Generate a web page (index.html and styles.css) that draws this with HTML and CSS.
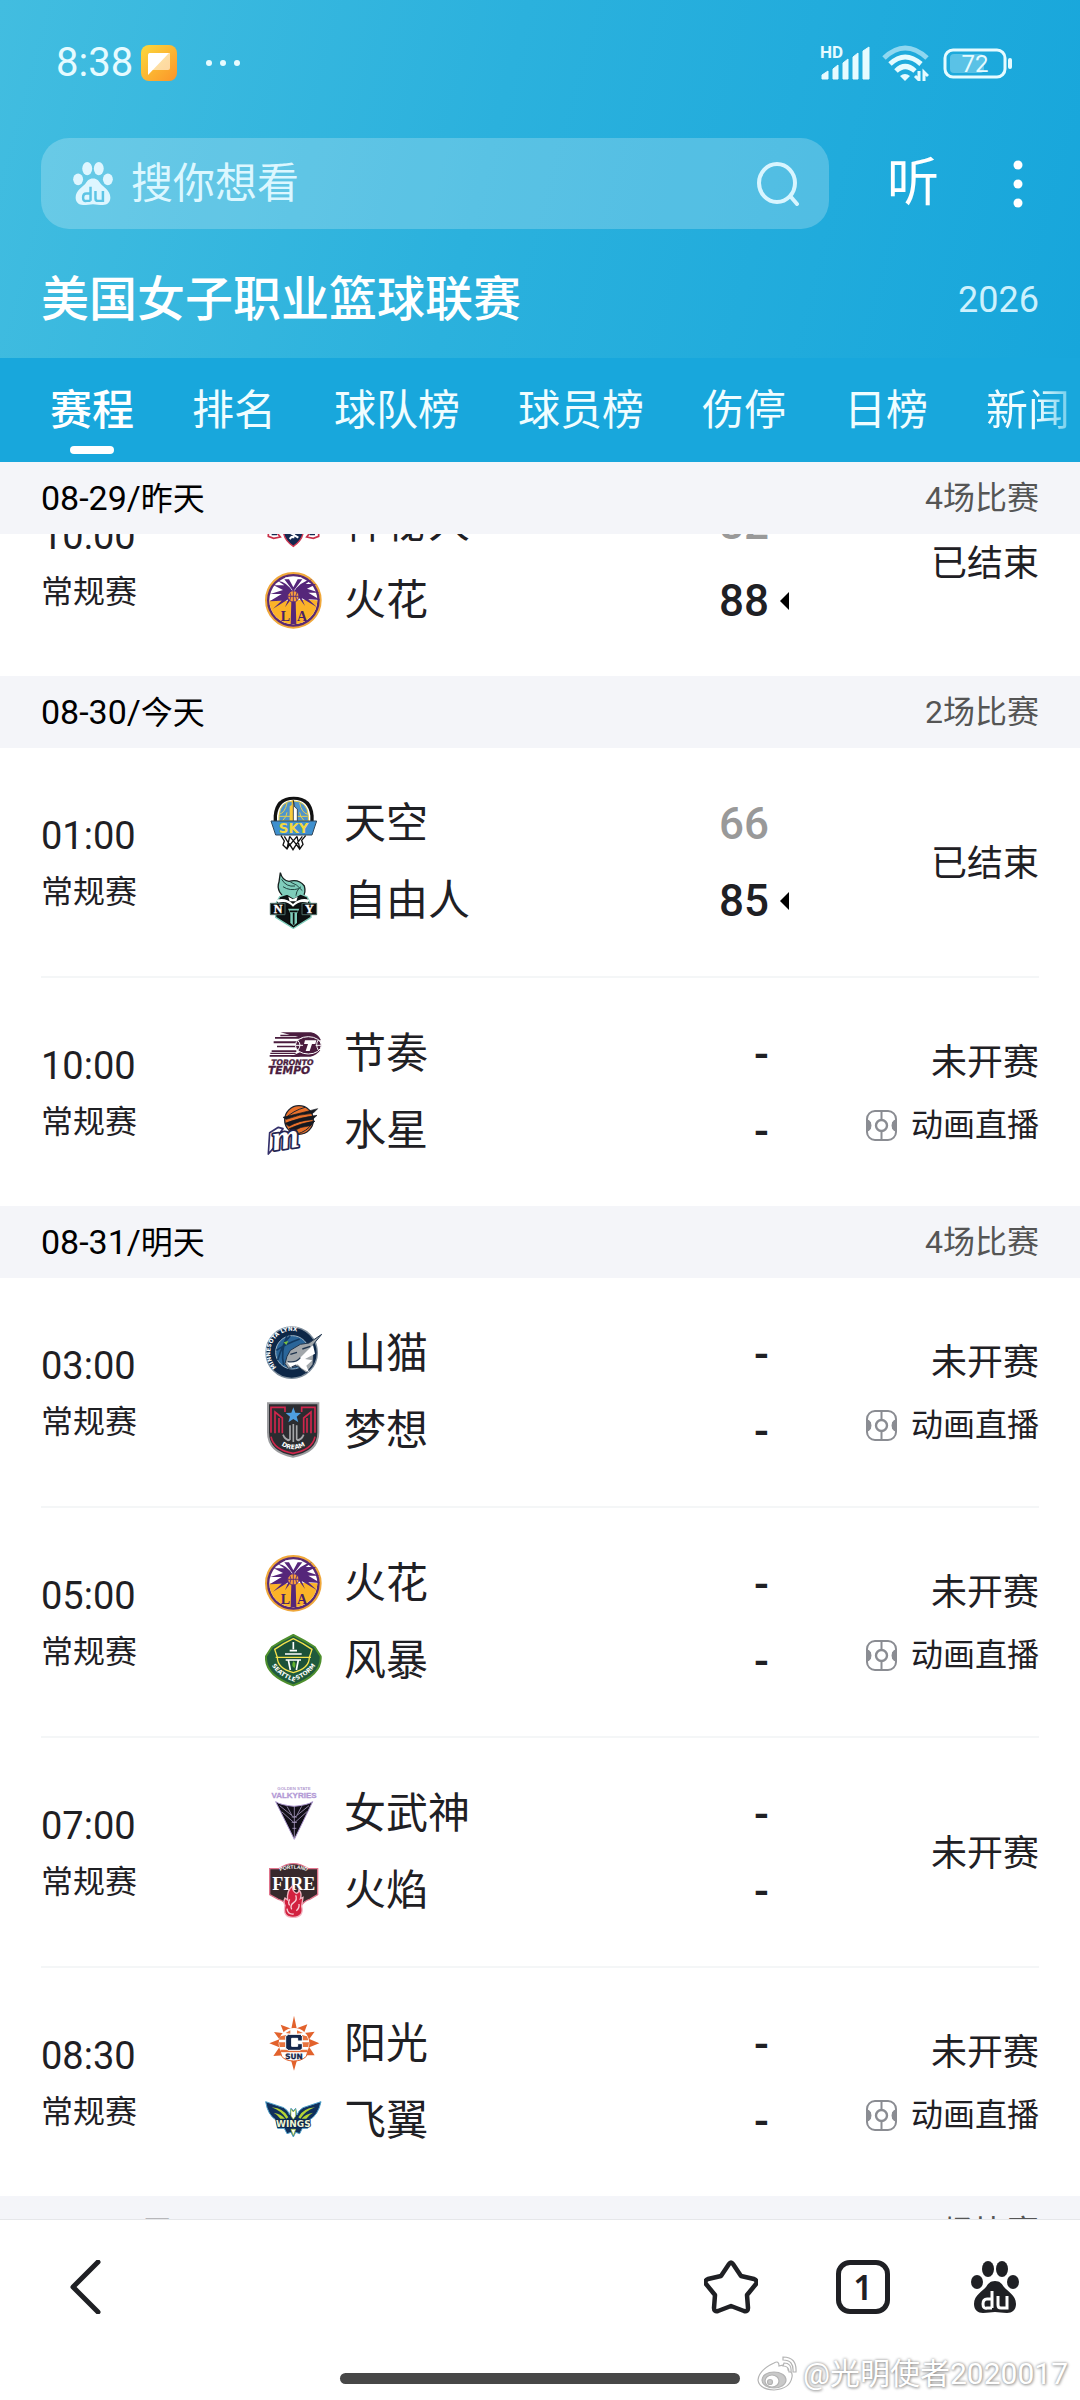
FILE: index.html
```html
<!DOCTYPE html>
<html lang="zh-CN">
<head>
<meta charset="utf-8">
<meta name="viewport" content="width=device-width">
<title>美国女子职业篮球联赛</title>
<link rel="stylesheet" href="styles.css">
</head>
<body>

<svg class="sprite" aria-hidden="true">
  <symbol id="paw" viewBox="0 0 48 52">
    <ellipse cx="17" cy="8" rx="6" ry="8"/>
    <ellipse cx="31" cy="8" rx="6" ry="8"/>
    <ellipse cx="6" cy="21" rx="6" ry="7"/>
    <ellipse cx="42" cy="21" rx="6" ry="7"/>
    <path d="M24 20c5 0 7 3 9 6 3 4 12 8 12 17 0 6-4 9-9 9-5 0-8-1-12-1s-7 1-12 1c-5 0-9-3-9-9 0-9 9-13 12-17 2-3 4-6 9-6z"/>
    <path class="paw-du" d="M21 30v17M21 38h-5q-4 0-4 5t4 4h5M27 35v9q0 3 3 3h6v-12"/>
  </symbol>

  <symbol id="live" viewBox="0 0 31 31">
    <rect x="1" y="1" width="29" height="29" rx="8" fill="none" stroke="#8a8c92" stroke-width="2"/>
    <path d="M2 10q3 1 3 5.500t-3 5.500zM29 10q-3 1-3 5.500t3 5.500z" fill="#8a8c92" stroke="#8a8c92"/>
    <path d="M15.500 1v9M15.500 21v9" stroke="#8a8c92" stroke-width="2"/>
    <circle cx="15.500" cy="15.500" r="5.500" fill="none" stroke="#8a8c92" stroke-width="2.400"/>
  </symbol>

  <symbol id="sparks" viewBox="0 0 171 171">
    <circle cx="85" cy="85" r="82" fill="#5a2a73" stroke="#f0a83a" stroke-width="6"/>
    <circle cx="85" cy="85" r="72" fill="#fff"/>
    <path d="M13 85a72 72 0 0 0 144 0q-30-4-72 0t-72 0z" fill="#fbb328"/>
    <path d="M79 90h13l2 66H77z" fill="#55267a"/>
    <path d="M85 62Q68 30 38 26l20 14-32 0 28 14-38 12 34 0-36 22 36-2-26 24 46-28-10 24 24-32 12-4 24 32-10-24 46 28-26-24 36 2-36-22 34 0-38-12 28-14-32 0 20-14Q102 30 85 62z" fill="#55267a"/>
    <path d="M85 54L60 16h50z" fill="#fff"/>
    <path d="M85 58L58 22l14 0 13 24 13-24h14z" fill="#55267a"/>
    <circle cx="85" cy="73" r="17" fill="#f79d3c" stroke="#55267a" stroke-width="3"/>
    <path d="M85 56v34M68 73h34M74 60q8 13 0 26M96 60q-8 13 0 26" fill="none" stroke="#55267a" stroke-width="2.500"/>
  </symbol>
</svg>

<header class="top">
  <div class="status-bar">
    <span class="clock">8:38</span>
    <svg class="app-icon" viewBox="0 0 36 36" aria-hidden="true">
      <defs><linearGradient id="amber" x1="0" y1="0" x2="1" y2="1"><stop offset="0" stop-color="#fbd93c"/><stop offset="1" stop-color="#fc9429"/></linearGradient></defs>
      <rect width="36" height="36" rx="8" fill="url(#amber)"/>
      <path d="M8 8h21v15q0 2-2 2H8z" fill="#fff" opacity=".55"/>
      <path d="M7 10q0-2 2-2h19L7 30z" fill="#fff"/>
    </svg>
    <svg class="more-dots" viewBox="0 0 36 8" aria-hidden="true"><g fill="#e6fbff"><circle cx="4" cy="4" r="3"/><circle cx="18" cy="4" r="3"/><circle cx="32" cy="4" r="3"/></g></svg>
    <svg class="signal" viewBox="0 0 50 36" aria-hidden="true">
      <text x="0" y="13" font-size="17" font-weight="700" fill="#e6fbff">HD</text>
      <path d="M2 34v-4l6-4v8zM13 34V24l5-4v14zM23 34V18l5-4v20zM33 34V12l5-4v26zM43 34V6l6-4v32z" fill="#e6fbff" stroke="#e6fbff" stroke-linejoin="round"/>
    </svg>
    <svg class="wifi" viewBox="0 0 47 36" fill="none" aria-hidden="true">
      <path d="M2 13q21-20 43 0" stroke="#8fd7f0" stroke-width="5"/>
      <path d="M8 19q15-14 31 0" stroke="#e6fbff" stroke-width="5"/>
      <path d="M14 26q9-9 19 0" stroke="#e6fbff" stroke-width="5"/>
      <path d="M18 31q5-4 10 0l-5 5z" fill="#e6fbff"/>
      <path d="M37 26v9l-4-4M42 36v-9l4 4" stroke="#e6fbff" stroke-width="3"/>
    </svg>
    <svg class="battery" viewBox="0 0 70 31" aria-hidden="true">
      <rect x="2" y="2" width="60" height="27" rx="8" fill="none" stroke="#e6fbff" stroke-width="3"/>
      <rect x="7" y="6" width="34" height="19" rx="4" fill="#5ac2e6"/>
      <rect x="65" y="10" width="4" height="11" rx="2" fill="#e6fbff"/>
      <text x="32" y="24" font-size="24" fill="#e6fbff" text-anchor="middle">72</text>
    </svg>
  </div>

  <div class="search-row">
    <form class="search" role="search">
      <svg class="search-paw" aria-hidden="true"><use href="#paw"/></svg>
      <input class="search-input" type="text" placeholder="搜你想看" aria-label="搜索">
      <button class="search-go" type="button" aria-label="搜索">
        <svg viewBox="0 0 44 44" fill="none" stroke="#d8f5ff" stroke-width="4" stroke-linecap="round"><ellipse cx="20" cy="21" rx="18" ry="19"/><path d="M34 35l6 7"/></svg>
      </button>
    </form>
    <button class="listen" type="button">听</button>
    <button class="kebab" type="button" aria-label="更多">
      <svg viewBox="0 0 42 52" fill="#fff"><circle cx="21" cy="7" r="4.500"/><circle cx="21" cy="26" r="4.500"/><circle cx="21" cy="45" r="4.500"/></svg>
    </button>
  </div>

  <div class="title-row">
    <h1 class="title">美国女子职业篮球联赛</h1>
    <span class="season">2026</span>
  </div>
</header>

<nav class="tabs">
  <a class="tab tab-active" href="#schedule">赛程</a>
  <a class="tab" href="#rank">排名</a>
  <a class="tab" href="#teams">球队榜</a>
  <a class="tab" href="#players">球员榜</a>
  <a class="tab" href="#injury">伤停</a>
  <a class="tab" href="#daily">日榜</a>
  <a class="tab" href="#news">新闻</a>
</nav>

<main class="schedule" id="schedule">
  <section>
    <h2 class="day"><span><span class="date">08-29/</span>昨天</span><span class="count">4场比赛</span></h2>
    <div class="scrolled">
      <article class="match">
        <div class="when"><time class="time">10:00</time><span class="stage">常规赛</span></div>
        <div class="teams">
          <div class="team">
            <svg class="logo" viewBox="0 0 171 171" aria-hidden="true">
              <path d="M55 18h60v88q0 28-30 48-30-20-30-48z" fill="#14284f" stroke="#d23a54" stroke-width="4"/>
              <path d="M85 40v90M65 60h40M70 110l30 18M98 106l-24 26" stroke="#fff" stroke-width="6"/>
              <path d="M10 110l8-16 10 10 14-6-4 18 8 10-20 4-16-6z" fill="#fff" stroke="#c9304a" stroke-width="5"/>
              <path d="M161 110l-8-16-10 10-14-6 4 18-8 10 20 4 16-6z" fill="#fff" stroke="#c9304a" stroke-width="5"/>
              <path d="M20 118h16M134 118h16" stroke="#14284f" stroke-width="5"/>
            </svg>
            <span class="name">神秘人</span><span class="score lost">82</span>
          </div>
          <div class="team won">
            <svg class="logo" viewBox="0 0 171 171" aria-hidden="true">
              <use href="#sparks"/>
              <text x="47" y="148" class="serif" font-size="42" fill="#4a2166">L</text>
              <text x="96" y="148" class="serif" font-size="42" fill="#4a2166">A</text>
            </svg>
            <span class="name">火花</span><span class="score">88</span>
          </div>
        </div>
        <div class="state"><span class="state-text">已结束</span></div>
      </article>
    </div>
  </section>

  <section>
    <h2 class="day"><span><span class="date">08-30/</span>今天</span><span class="count">2场比赛</span></h2>
    <article class="match">
      <div class="when"><time class="time">01:00</time><span class="stage">常规赛</span></div>
      <div class="teams">
        <div class="team">
          <svg class="logo" viewBox="0 0 171 171" aria-hidden="true">
            <path d="M26 78V62Q30 5 86 5t60 57v16z" fill="#111"/>
            <path d="M36 78V62Q42 14 86 14t50 48v16z" fill="#fff"/>
            <path d="M42 78V62Q46 18 86 18t44 44v16z" fill="#4e94cc" stroke="#e8cf4a" stroke-width="3"/>
            <path d="M42 58q18-4 24-34M128 58q-18-4-24-34M42 64h86M52 78q14-14 14-26M118 78q-14-14-14-26" fill="none" stroke="#e8cf4a" stroke-width="3"/>
            <path d="M74 80V34l6-4V16h5v64z" fill="#f8cb3c"/>
            <path d="M85 80V16l4 20 8 6v38z" fill="#fff" stroke="#111" stroke-width="2"/>
            <path d="M18 78h137l-14 42H32z" fill="#3f90cf" stroke="#31475a" stroke-width="3"/>
            <text x="86" y="113" class="wide" font-size="40" fill="#f3d840" text-anchor="middle">SKY</text>
            <path d="M48 122l10 16-4 12 12 12 8-14 10 16 10-16 10 14 10-14-4-12 12-14M58 124l16 26M74 124l-8 38M74 124l20 24M96 124l-20 24M96 124l8 36M112 124l-18 24" fill="none" stroke="#111" stroke-width="4"/>
          </svg>
          <span class="name">天空</span><span class="score lost">66</span>
        </div>
        <div class="team won">
          <svg class="logo" viewBox="0 0 171 171" aria-hidden="true">
            <path d="M46 2q6 24 26 26 30-8 46 14 6 20-6 36l-24 2q-34 0-44-20-8-16-2-30z" fill="#7fcdbb" stroke="#16201f" stroke-width="4"/>
            <path d="M50 22q14 24 40 20M54 44q20 14 48 6M76 30q20 6 36 26M94 78q-4-20 14-34" fill="none" stroke="#214641" stroke-width="3"/>
            <path d="M44 74l22-8 20 12 20-12 20 8 12 22v40l-53 33-53-33V96z" fill="#0d1112" stroke="#7fcdbb" stroke-width="4"/>
            <path d="M34 84q26-10 50 12 24-22 50-12l-6 8q-26-8-44 12-18-20-44-12zM70 74l14 8 14-8-4 14H74z" fill="#fff"/>
            <path d="M16 94h44v34H16zM111 94h44v34h-44z" fill="#0a0a0a" stroke="#4b6b66" stroke-width="3"/>
            <path d="M66 108h40l-8 18v28l-12 10-12-10v-28z" fill="#7fcdbb" stroke="#0a0a0a" stroke-width="4"/>
            <path d="M74 118h24M86 122v36" stroke="#0a0a0a" stroke-width="5"/>
            <text x="39" y="123" class="serif" font-size="36" fill="#fff" stroke="#fff" text-anchor="middle">N</text>
            <text x="133" y="123" class="serif" font-size="36" fill="#fff" stroke="#fff" text-anchor="middle">Y</text>
          </svg>
          <span class="name">自由人</span><span class="score">85</span>
        </div>
      </div>
      <div class="state"><span class="state-text">已结束</span></div>
    </article>
    <article class="match">
      <div class="when"><time class="time">10:00</time><span class="stage">常规赛</span></div>
      <div class="teams">
        <div class="team">
          <svg class="logo" viewBox="0 0 171 171" aria-hidden="true">
            <path d="M46 22h92q22 4 30 24l-60-8zM30 36h78v5H30zM46 29h70v5H46zM26 49h72v6H26zM36 62h56v5H36zM20 76h74v5H20zM14 90h90v5H14zM16 83h76v4H16z" fill="#4a1c3e"/>
            <path d="M76 95h60q20-4 30-20l-60 6z" fill="#4a1c3e"/>
            <ellipse cx="130" cy="61" rx="39" ry="26" fill="#4a1c3e" stroke="#fff" stroke-width="3"/>
            <path d="M92 61h22M152 61h17M98 46q14 14 0 30M160 44q-10 14 0 32" fill="none" stroke="#fff" stroke-width="3"/>
            <path d="M120 46h34l-3 11h-10l-7 21h-12l7-21h-12z" fill="#fff"/>
            <text x="82" y="121" class="wide slant" font-size="23" fill="#4a1c3e" stroke="#4a1c3e" text-anchor="middle">TORONTO</text>
            <text x="72" y="147" class="wide slant" font-size="32" fill="#4a1c3e" stroke="#4a1c3e" text-anchor="middle">TEMPO</text>
          </svg>
          <span class="name">节奏</span><span class="score">-</span>
        </div>
        <div class="team">
          <svg class="logo" viewBox="0 0 171 171" aria-hidden="true">
            <circle cx="102" cy="54" r="43" fill="#e9702a" stroke="#20242e" stroke-width="4"/>
            <path d="M60 50q24-24 60-34M96 96q30-8 44-30" fill="none" stroke="#20242e" stroke-width="3"/>
            <path d="M54 46q50-12 104-26l-14 14q-40 2-80 18zM60 64q44-18 96-24l-14 13q-40 2-70 20zM72 80q40-18 78-23l-14 14q-30 2-54 18z" fill="#15181f" stroke="#15181f" stroke-width="2"/>
            <path d="M14 92l26-16 14 4-10 14-8 34-12 12-14 16z" fill="#fff" stroke="#34306b" stroke-width="5" stroke-linejoin="round"/>
            <text x="22" y="140" class="serif slant" font-size="104" fill="#fff" stroke="#232350" stroke-width="11" stroke-linejoin="round" paint-order="stroke" transform="rotate(-8 60 120)">m</text>
          </svg>
          <span class="name">水星</span><span class="score">-</span>
        </div>
      </div>
      <div class="state"><span class="state-text">未开赛</span><a class="live" href="#live"><svg class="live-icon"><use href="#live"/></svg>动画直播</a></div>
    </article>
  </section>

  <section>
    <h2 class="day"><span><span class="date">08-31/</span>明天</span><span class="count">4场比赛</span></h2>
    <article class="match">
      <div class="when"><time class="time">03:00</time><span class="stage">常规赛</span></div>
      <div class="teams">
        <div class="team">
          <svg class="logo" viewBox="0 0 171 171" aria-hidden="true">
            <circle cx="80" cy="83" r="77" fill="#0d2747" stroke="#7f8e9c" stroke-width="4"/>
            <circle cx="82" cy="82" r="50" fill="#2a6599" stroke="#9db4c6" stroke-width="3"/>
            <path d="M34 76q30-20 70-34M38 106q14-50 38-74M56 120q-10-40 10-88" fill="none" stroke="#123a63" stroke-width="5"/>
            <path id="lynx-arc" d="M35 127A62 62 0 1 1 124 36" fill="none"/>
            <text class="wide" font-size="17" fill="#fff"><textPath href="#lynx-arc">MINNESOTA LYNX</textPath></text>
            <path d="M170 28l-28 34 4 22-2 34-20 26-26-20-28 6-10-14 6-22 10-18 30-18 26-4z" fill="#a2a7ab" stroke="#20354e" stroke-width="3"/>
            <path d="M144 60l6 26-30 16 22 4-18 16 8 20-22-12-12-12-20 10-12-16 32-6z" fill="#fff"/>
            <path d="M76 88l20-6M68 110q26 4 38-12M80 126l14-6M112 72l24-8" stroke="#20354e" stroke-width="4" fill="none"/>
            <path d="M56 52l14-4-6 12z" fill="#7abf3f"/>
          </svg>
          <span class="name">山猫</span><span class="score">-</span>
        </div>
        <div class="team">
          <svg class="logo" viewBox="0 0 171 171" aria-hidden="true">
            <path d="M9 4h151v87q0 60-76 73Q9 151 9 91z" fill="#2b2c30" stroke="#9b9c9f" stroke-width="6"/>
            <path d="M18 92V16h42v14M150 92V16h-40v14M30 94V30l22 18v46M42 92V48M138 94V30l-22 18v46M126 92V48" fill="none" stroke="#d0264c" stroke-width="5"/>
            <path d="M18 104q8 40 66 50 58-10 66-50" fill="none" stroke="#d0264c" stroke-width="5"/>
            <path d="M85 16l6 16 17 1-13 11 5 17-15-10-15 10 5-17-13-11 17-1z" fill="#4e9ee0"/>
            <path d="M85 66v54M75 70v42q-4 6-10 0M95 70v42q4 6 10 0M54 98q6 16 20 16M116 98q-6 16-20 16" fill="none" stroke="#a6a7aa" stroke-width="5"/>
            <path id="dream-arc" d="M32 112Q50 140 85 142 120 140 138 112" fill="none"/>
            <text class="wide" font-size="19" fill="#fff" text-anchor="middle"><textPath href="#dream-arc" startOffset="50%">DREAM</textPath></text>
          </svg>
          <span class="name">梦想</span><span class="score">-</span>
        </div>
      </div>
      <div class="state"><span class="state-text">未开赛</span><a class="live" href="#live"><svg class="live-icon"><use href="#live"/></svg>动画直播</a></div>
    </article>
    <article class="match">
      <div class="when"><time class="time">05:00</time><span class="stage">常规赛</span></div>
      <div class="teams">
        <div class="team">
          <svg class="logo" viewBox="0 0 171 171" aria-hidden="true">
            <use href="#sparks"/>
            <text x="47" y="148" class="serif" font-size="42" fill="#4a2166">L</text>
            <text x="96" y="148" class="serif" font-size="42" fill="#4a2166">A</text>
          </svg>
          <span class="name">火花</span><span class="score">-</span>
        </div>
        <div class="team">
          <svg class="logo" viewBox="0 0 171 171" aria-hidden="true">
            <path d="M85 9q36 18 64 36l18 28q4 56-82 87Q-1 129 3 73l18-28Q49 27 85 9z" fill="#1f5a3c" stroke="#4e8f2d" stroke-width="6"/>
            <path d="M85 20q30 14 56 32l-8 24q0 34-48 46-48-12-48-46l-8-24Q55 34 85 20z" fill="#1c5138" stroke="#f4e14c" stroke-width="4"/>
            <path d="M32 76h106" fill="none" stroke="#f4e14c" stroke-width="4"/>
            <path d="M85 30v22M74 56h22M60 66h50M70 84l6 30M100 84l-6 30M62 84h46" stroke="#fff" stroke-width="5"/>
            <path d="M85 88q10 4 4 20-12-4-4-20z" fill="#63b32e"/>
            <path id="storm-arc" d="M12 80Q24 126 85 148 147 126 160 80" fill="none"/>
            <text class="wide" font-size="18" fill="#fff" text-anchor="middle"><textPath href="#storm-arc" startOffset="50%">SEATTLE STORM</textPath></text>
          </svg>
          <span class="name">风暴</span><span class="score">-</span>
        </div>
      </div>
      <div class="state"><span class="state-text">未开赛</span><a class="live" href="#live"><svg class="live-icon"><use href="#live"/></svg>动画直播</a></div>
    </article>
    <article class="match">
      <div class="when"><time class="time">07:00</time><span class="stage">常规赛</span></div>
      <div class="teams">
        <div class="team">
          <svg class="logo" viewBox="0 0 171 171" aria-hidden="true">
            <text x="87" y="16" class="narrow" font-size="13" fill="#b5a0d2" text-anchor="middle">GOLDEN STATE</text>
            <text x="87" y="40" class="narrow" font-size="24" fill="#b39ad6" stroke="#b39ad6" text-anchor="middle">VALKYRIES</text>
            <path d="M32 50q14 10 55 14 42-4 56-14L88 163z" fill="#120f18" stroke="#a994cc" stroke-width="3"/>
            <path d="M88 64v98M86 96L44 62M86 112L50 80M90 96l42-34M90 112l36-32M80 90L66 64M96 90l14-26M80 96h16M80 112h16M82 130h12" fill="none" stroke="#c8b8e4" stroke-width="2"/>
          </svg>
          <span class="name">女武神</span><span class="score">-</span>
        </div>
        <div class="team">
          <svg class="logo" viewBox="0 0 171 171" aria-hidden="true">
            <path d="M14 20h28Q84-10 130 20h28v78l-24 14q-16 4-26 20H66q-8-16-26-20L14 98z" fill="#37292c" stroke="#e0748c" stroke-width="4"/>
            <path id="fire-arc" d="M42 28Q86 12 130 28" fill="none"/>
            <text class="narrow" font-size="15" fill="#fff" text-anchor="middle"><textPath href="#fire-arc" startOffset="50%">PORTLAND</textPath></text>
            <text x="86" y="84" class="serif" font-size="54" fill="#fff" text-anchor="middle">FIRE</text>
            <path d="M82 72q0 16 12 22 8-2 8-10 10 12 4 26l8-4q-2 14-4 26 8 34-26 34-32 0-24-36-6-10 0-22l8 6q-4-26 14-42z" fill="#d2213f" stroke="#f2b5c1" stroke-width="4"/>
            <path d="M66 140q2 18 20 16M92 100q6 14-6 22-12 8-6 20M74 112q-6 10 0 18M102 126q2 12-8 20" fill="none" stroke="#f7cfd7" stroke-width="4"/>
          </svg>
          <span class="name">火焰</span><span class="score">-</span>
        </div>
      </div>
      <div class="state"><span class="state-text">未开赛</span></div>
    </article>
    <article class="match">
      <div class="when"><time class="time">08:30</time><span class="stage">常规赛</span></div>
      <div class="teams">
        <div class="team">
          <svg class="logo" viewBox="0 0 171 171" aria-hidden="true">
            <path d="M87 2l8 38 32-12-10 26 32-4-16 22 30 13-30 12 16 24-30 0-12 14-12 4-8 28-8-28-12-4-10-14-32 2 18-26-30-12 30-12-16-22 30 4-10-26 32 12z" fill="#e2622c"/>
            <circle cx="87" cy="85" r="46" fill="#fff"/>
            <path d="M46 64l18-4v14H42zM42 82h22v14H44zM46 104h82l-8 16H56zM110 60l16 4 4 12h-18zM112 82h20l-2 14h-18zM62 54l14-8v10zM96 46l18 8-18 2z" fill="#e8743f"/>
            <path d="M70 58h36l6 6v14H98v-8H80v24h18v-8h14v14l-6 6H70l-8-6V64z" fill="#14264a" stroke="#fff" stroke-width="3"/>
            <path d="M46 110h82l-4 14q-14 14-38 14t-36-14z" fill="#fff" stroke="#e2622c" stroke-width="3"/>
            <text x="87" y="131" class="wide" font-size="22" fill="#14264a" stroke="#14264a" text-anchor="middle">SUN</text>
          </svg>
          <span class="name">阳光</span><span class="score">-</span>
        </div>
        <div class="team">
          <svg class="logo" viewBox="0 0 171 171" aria-hidden="true">
            <path d="M2 29l54 18q14 8 18 22l4-20 7 7 7-7 4 20q4-14 18-22l54-18q-8 40-36 56l-4 24h-16l-8 16-12-4-7 14-7-14-12 4-8-16H38l-4-24Q8 69 2 29z" fill="#10305c" stroke="#4e9fc9" stroke-width="3"/>
            <path d="M20 46q38 4 50 30l-6 4Q48 56 20 46zM26 62q24 4 34 18H46q-8-12-20-18zM150 46q-38 4-50 30l6 4q16-24 44-34zM144 62q-24 4-34 18h14q8-12 20-18z" fill="#b5d333"/>
            <path d="M78 52l7 8 7-8v20l-7 10-7-10zM78 112h14l-7 18z" fill="#fff" stroke="#b5d333" stroke-width="2"/>
            <text x="85" y="106" class="wide" font-size="27" fill="#eef5d4" stroke="#0b2448" stroke-width="5" paint-order="stroke" text-anchor="middle">WINGS</text>
          </svg>
          <span class="name">飞翼</span><span class="score">-</span>
        </div>
      </div>
      <div class="state"><span class="state-text">未开赛</span><a class="live" href="#live"><svg class="live-icon"><use href="#live"/></svg>动画直播</a></div>
    </article>
  </section>

  <section>
    <h2 class="day"><span><span class="date">09-01/</span>周二</span><span class="count">4场比赛</span></h2>
  </section>
</main>

<footer class="bottom">
  <div class="toolbar">
    <button class="tool tool-back" type="button" aria-label="返回">
      <svg viewBox="0 0 54 54" fill="none" stroke="#1f2024" stroke-width="5" stroke-linecap="round" stroke-linejoin="round"><path d="M40 2L15 27l25 25"/></svg>
    </button>
    <button class="tool" type="button" aria-label="收藏">
      <svg viewBox="0 0 54 54" fill="none" stroke="#1f2024" stroke-width="4.500" stroke-linejoin="round"><path d="M25 4q2-3 4 0l8 12 13 3q4 2 2 5l-9 11 1 13q0 4-4 3l-13-5-13 5q-4 1-4-3l1-13-9-11q-2-3 2-5l13-3z"/></svg>
    </button>
    <button class="tool tool-windows" type="button" aria-label="窗口">1</button>
    <button class="tool" type="button" aria-label="首页">
      <svg class="home-paw"><use href="#paw"/></svg>
    </button>
  </div>
  <div class="home-bar"></div>
  <div class="watermark">
    <svg class="weibo" viewBox="0 0 40 36" aria-hidden="true">
      <g fill="#fff" stroke="#b4b4b4" stroke-width="1.200">
        <path d="M17 7q5-3 5 3 10-3 9 4 5 2 4 7-2 12-18 13Q2 33 1 24 2 14 17 7z"/>
        <ellipse cx="17" cy="24" rx="12" ry="8" fill="#c9c9c9"/>
        <ellipse cx="15" cy="25" rx="7" ry="6"/>
        <circle cx="13" cy="26" r="2.500" fill="#c9c9c9"/>
        <path d="M27 7q8 0 7 9h-2q0-6-6-6zM26 1q14 0 13 15h-3Q37 4 26 4z"/>
      </g>
    </svg>
    <span>@光明使者2020017</span>
  </div>
</footer>

</body>
</html>
```
FILE: styles.css
```css
* {
  box-sizing: border-box;
}

body {
  margin: 0;
  height: 100vh;
  display: flex;
  flex-direction: column;
  background: #fff;
  color: #1f2024;
  font-family: Roboto, "Noto Sans CJK SC", sans-serif;
}

h1,
h2 {
  margin: 0;
  font-weight: 400;
}

a {
  color: inherit;
  text-decoration: none;
}

button {
  padding: 0;
  border: 0;
  background: none;
  color: inherit;
  font-family: inherit;
}

svg {
  display: block;
}

.sprite {
  position: absolute;
  width: 0;
  height: 0;
}

.serif {
  font-family: "Liberation Serif", serif;
  font-weight: 700;
}

.wide {
  font-family: "DejaVu Sans", sans-serif;
  font-weight: 700;
}

.narrow {
  font-family: "Liberation Sans Narrow", "Liberation Sans", sans-serif;
  font-weight: 700;
}

.slant {
  font-style: italic;
}

/* Header */

.top {
  flex: none;
  padding: 0 41px;
  background: linear-gradient(105deg, #42bde0 0%, #2bb1dd 45%, #17a6db 100%);
  color: #fff;
}

.status-bar {
  display: flex;
  align-items: center;
  height: 126px;
  padding: 0 26px 0 15px;
}

.clock {
  font-size: 40px;
  line-height: 48px;
  color: #e6fbff;
}

.app-icon {
  width: 36px;
  height: 36px;
  margin-left: 8px;
}

.more-dots {
  width: 36px;
  height: 8px;
  margin-left: 28px;
}

.signal {
  width: 50px;
  height: 36px;
  margin-left: auto;
}

.wifi {
  width: 47px;
  height: 36px;
  margin-left: 12px;
}

.battery {
  width: 70px;
  height: 31px;
  margin-left: 14px;
}

.search-row {
  display: flex;
  align-items: center;
  gap: 58px;
  padding-top: 12px;
}

.search {
  flex: 1;
  display: flex;
  align-items: center;
  height: 91px;
  padding: 0 28px 0 32px;
  border-radius: 28px;
  background: rgba(255, 255, 255, 0.22);
}

.search-paw {
  width: 40px;
  height: 43px;
  fill: #def6ff;
  color: #5cc4e5;
}

.paw-du {
  fill: none;
  stroke: currentColor;
  stroke-width: 3;
}

.search-input {
  flex: 1;
  min-width: 0;
  height: 60px;
  margin-left: 18px;
  padding: 0;
  border: 0;
  outline: 0;
  background: none;
  color: #fff;
  font-family: inherit;
  font-size: 42px;
}

.search-input::placeholder {
  color: #dcf7ff;
  opacity: 1;
}

.search-go svg {
  width: 44px;
  height: 44px;
}

.listen {
  font-size: 52px;
  line-height: 60px;
}

.kebab svg {
  width: 42px;
  height: 52px;
}

.title-row {
  display: flex;
  align-items: center;
  justify-content: space-between;
  height: 129px;
  padding-top: 12px;
}

.title {
  font-size: 48px;
  line-height: 72px;
  font-weight: 500;
}

.season {
  font-size: 36px;
  color: #cdf1fd;
}

/* Tabs */

.tabs {
  flex: none;
  display: flex;
  gap: 58px;
  height: 104px;
  padding: 1px 0 0 50px;
  overflow: hidden;
  background: #18a7dc;
  color: #f0fdff;
  font-size: 42px;
  line-height: 104px;
  white-space: nowrap;
}

.tab:last-child {
  color: transparent;
  background: linear-gradient(90deg, #f0fdff 60%, #6fcdec 100%);
  background-clip: text;
}

.tab-active {
  position: relative;
  color: #fff;
  font-weight: 500;
}

.tab-active::after {
  content: "";
  position: absolute;
  left: 50%;
  bottom: 8px;
  width: 44px;
  height: 8px;
  margin-left: -22px;
  border-radius: 4px;
  background: #fff;
}

/* Schedule */

.schedule {
  flex: 1;
  min-height: 0;
  overflow: hidden;
}

.day {
  display: flex;
  align-items: center;
  justify-content: space-between;
  height: 72px;
  padding: 0 41px;
  background: #f4f5f9;
  color: #000;
  font-size: 32px;
  line-height: 48px;
}

.date {
  font-size: 34px;
}

.count {
  color: #555;
}

.scrolled {
  display: flex;
  flex-direction: column;
  justify-content: flex-end;
  height: 142px;
  overflow: hidden;
}

.match {
  flex: none;
  display: grid;
  grid-template-columns: 224px 1fr 250px;
  align-items: center;
  height: 228px;
  margin: 0 41px;
}

.match + .match {
  height: 230px;
  border-top: 2px solid #f4f6f7;
}

.when {
  display: flex;
  flex-direction: column;
  padding-top: 4px;
  line-height: 56px;
}

.time {
  font-size: 38px;
}

.stage {
  font-size: 32px;
}

.team {
  display: flex;
  align-items: center;
  height: 77px;
  padding-right: 20px;
}

.logo {
  width: 57px;
  height: 57px;
}

.name {
  flex: 1;
  margin-left: 22px;
  font-size: 42px;
  line-height: 60px;
}

.score {
  font-size: 44px;
  line-height: 60px;
  font-weight: 500;
}

.lost {
  color: #999;
}

.won {
  padding-right: 0;
}

.won::after {
  content: "";
  margin-left: 11px;
  border: 9px solid transparent;
  border-left: 0;
  border-right-color: #000;
}

.state {
  display: flex;
  flex-direction: column;
  align-items: flex-end;
  padding-top: 4px;
  line-height: 62px;
}

.state-text {
  font-size: 36px;
}

.live {
  display: flex;
  align-items: center;
  gap: 14px;
  font-size: 32px;
}

.live-icon {
  width: 31px;
  height: 31px;
}

/* Bottom bar */

.bottom {
  flex: none;
  position: relative;
  padding-bottom: 16px;
  border-top: 1px solid #e6e7ea;
  background: #fff;
}

.toolbar {
  display: flex;
  align-items: center;
  gap: 78px;
  height: 134px;
  padding: 0 58px;
}

.tool {
  width: 54px;
  height: 54px;
}

.tool svg {
  width: 54px;
  height: 54px;
}

.tool-back {
  margin-right: auto;
}

.tool-windows {
  border: 5px solid #1f2024;
  border-radius: 14px;
  font-family: "Noto Sans", sans-serif;
  font-size: 34px;
  line-height: 44px;
  font-weight: 600;
}

.tool .home-paw {
  width: 54px;
  height: 52px;
  fill: #1f2024;
  color: #fff;
}

.home-bar {
  width: 400px;
  height: 11px;
  margin: 19px auto 0;
  border-radius: 6px;
  background: #474747;
}

.watermark {
  position: absolute;
  right: 12px;
  bottom: 4px;
  display: flex;
  align-items: center;
  gap: 6px;
  color: #fff;
  font-size: 30px;
  line-height: 44px;
  text-shadow: 0 0 3px #888, 1px 1px 3px #aaa;
}

.weibo {
  width: 40px;
  height: 36px;
}
```
